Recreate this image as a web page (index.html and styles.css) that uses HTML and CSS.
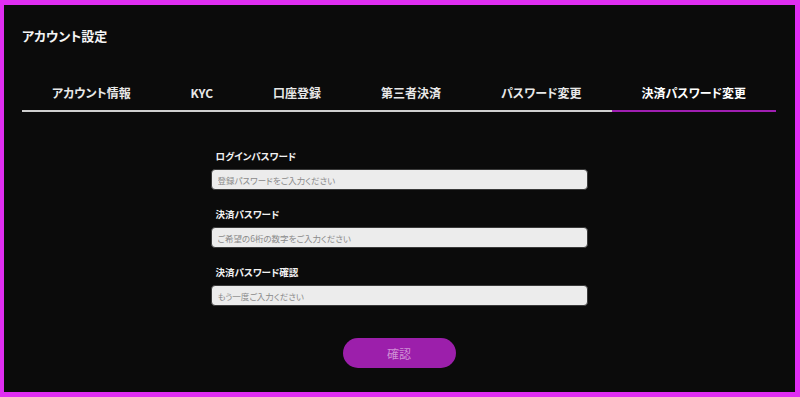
FILE: index.html
```html
<!DOCTYPE html>
<html lang="ja">
<head>
<meta charset="utf-8">
<title>アカウント設定</title>
<link rel="stylesheet" href="styles.css">
</head>
<body>
<div class="frame">
  <h1 class="title">アカウント設定</h1>
  <nav class="tabs">
    <div class="tab">アカウント情報</div>
    <div class="tab">KYC</div>
    <div class="tab">口座登録</div>
    <div class="tab">第三者決済</div>
    <div class="tab">パスワード変更</div>
    <div class="tab active">決済パスワード変更</div>
  </nav>
  <form class="form">
    <div class="group">
      <label class="label">ログインパスワード</label>
      <input class="input" type="password" placeholder="登録パスワードをご入力ください">
    </div>
    <div class="group">
      <label class="label">決済パスワード</label>
      <input class="input" type="password" placeholder="ご希望の6桁の数字をご入力ください">
    </div>
    <div class="group">
      <label class="label">決済パスワード確認</label>
      <input class="input" type="password" placeholder="もう一度ご入力ください">
    </div>
    <div class="actions">
      <button class="btn" type="button">確認</button>
    </div>
  </form>
</div>
</body>
</html>
```
FILE: styles.css
```css
* { box-sizing: border-box; }
html, body { margin: 0; padding: 0; }
body {
  width: 800px;
  height: 397px;
  background: #0b0b0b;
  font-family: "Noto Sans CJK JP", "Noto Sans", sans-serif;
  font-feature-settings: "palt";
  color: #f2f2f2;
}
.frame {
  width: 800px;
  height: 397px;
  border-style: solid;
  border-color: #e02ef2;
  border-width: 5px 5px 5px 4px;
  background: #0b0b0b;
  padding: 22px 19px 0 18px;
}
.title {
  margin: 0;
  font-size: 13px;
  line-height: 18px;
  font-weight: 700;
  color: #f4f4f4;
}
.tabs {
  display: flex;
  margin-top: 40px;
}
.tab {
  flex: 1 1 auto;
  text-align: center;
  font-size: 12px;
  line-height: 16px;
  font-weight: 700;
  color: #e8e8e8;
  padding-bottom: 9px;
  border-bottom: 2px solid #cfcfcf;
  white-space: nowrap;
}
.tab.active {
  color: #ffffff;
  border-bottom-color: #a01fb2;
}
.form {
  width: 377px;
  margin: 37px auto 0;
  display: flex;
  flex-direction: column;
}
.group {
  display: flex;
  flex-direction: column;
}
.group + .group { margin-top: 17px; }
.label {
  font-size: 9.5px;
  line-height: 14px;
  font-weight: 700;
  color: #f2f2f2;
  padding-left: 5px;
  margin-bottom: 6px;
}
.input {
  width: 100%;
  height: 21px;
  border: 1px solid #3a3a3a;
  border-radius: 4px;
  background: #ececec;
  padding: 0 6px;
  font-family: inherit;
  font-feature-settings: "palt";
  font-size: 8.5px;
  color: #333;
  outline: none;
}
.input::placeholder { color: #8a8a8a; }
.actions {
  display: flex;
  justify-content: center;
  margin-top: 32px;
}
.btn {
  width: 113px;
  height: 30px;
  border: none;
  border-radius: 15px;
  background: #9c1fab;
  color: #cf8fd6;
  font-family: inherit;
  font-size: 12px;
  cursor: pointer;
}
```
